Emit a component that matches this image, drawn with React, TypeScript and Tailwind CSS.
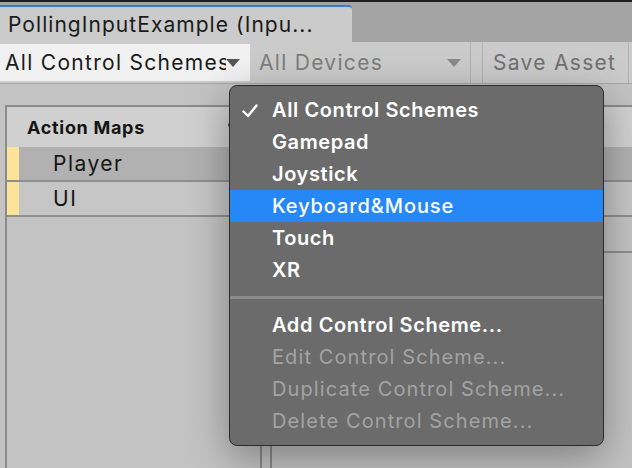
import React from "react";

// Unity Input Actions editor with the control-scheme dropdown open.

const menuTop = ["Gamepad", "Joystick", "Keyboard&Mouse", "Touch", "XR"];
const menuBottom: { label: string; enabled: boolean }[] = [
  { label: "Add Control Scheme...", enabled: true },
  { label: "Edit Control Scheme...", enabled: false },
  { label: "Duplicate Control Scheme...", enabled: false },
  { label: "Delete Control Scheme...", enabled: false },
];

function Caret({ className }: { className: string }) {
  return (
    <svg width="14" height="8" viewBox="0 0 14 8" className={className}>
      <path d="M0 0 H14 L7 8 Z" fill="currentColor" />
    </svg>
  );
}

export default function App() {
  return (
    <div className="relative h-[468px] w-[632px] overflow-hidden bg-[#c3c3c3] font-['Inter',sans-serif]">
      {/* tab strip */}
      <div className="h-[2px] bg-[#1f1f1f]" />
      <div className="flex h-[40px] items-end bg-[#a4a4a4]">
        <div className="flex h-[37px] w-[352px] items-center rounded-tr-[4px] border-t-[2px] border-[#3a7bd5] bg-[#cbcbcb] pl-[8px] text-[21px] tracking-[1.05px] text-[#1a1a1a]">
          PollingInputExample (Inpu...
        </div>
      </div>

      {/* toolbar */}
      <div className="flex h-[42px] items-center border-b border-[#a8a8a8] bg-[#cbcbcb] text-[21px] tracking-[1.3px]">
        <div className="relative flex h-[37px] w-[250px] items-center bg-[#f1f1f1] pl-[5px]">
          <span className="w-[221px] overflow-hidden whitespace-nowrap text-[#1a1a1a]">All Control Schemes</span>
          <Caret className="absolute left-[226px] top-[15px] text-[#555]" />
        </div>
        <div className="relative flex h-full w-[220px] items-center pl-[9px] text-[#7d7d7d]">
          All Devices
          <Caret className="absolute left-[197px] top-[17px] text-[#8a8a8a]" />
        </div>
        <div className="h-full w-[13px] border-x border-[#b3b3b3]" />
        <div className="flex h-full w-[145px] items-center pl-[10px] text-[#707070]">Save Asset</div>
        <div className="h-full flex-1 border-l border-[#b3b3b3]" />
      </div>

      {/* panels */}
      <div className="flex gap-[8px] pl-[5px] pt-[21px]">
        <div className="relative h-[400px] w-[257px] border-x-2 border-t-2 border-[#8b8b8b]">
          <div className="flex h-[40px] items-center bg-[#d0d0d0] pl-[20px] text-[18px] font-bold tracking-[0.7px] text-[#151515]">
            Action Maps
          </div>
          <span className="absolute left-[221px] top-[16px] h-[4px] w-[4px] rounded-full bg-[#333]" />
          <div className="flex h-[35px] border-b-2 border-[#8f8f8f] bg-[#b1b1b1]">
            <div className="w-[12px] bg-[#fbe39a]" />
            <span className="flex items-center pl-[34px] text-[21px] tracking-[1.5px] text-[#151515]">Player</span>
          </div>
          <div className="flex h-[35px] border-b-2 border-[#8f8f8f] bg-[#c6c6c6]">
            <div className="w-[12px] bg-[#fbe39a]" />
            <span className="flex items-center pl-[34px] text-[21px] tracking-[1.5px] text-[#151515]">UI</span>
          </div>
        </div>
        <div className="h-[400px] flex-1 border-l-2 border-t-2 border-[#8b8b8b]">
          <div className="h-[40px] bg-[#d0d0d0]" />
          <div className="h-[35px] border-b-2 border-[#8f8f8f] bg-[#b1b1b1]" />
          <div className="h-[35px] border-b-2 border-[#8f8f8f] bg-[#c6c6c6]" />
          <div className="h-[36px] border-b-2 border-[#8f8f8f]" />
        </div>
      </div>

      {/* dropdown menu */}
      <div className="absolute left-[229px] top-[85px] w-[375px] rounded-[8px] border border-[#2c2c2c] bg-[#6b6b6b] py-[8px] text-[20px] font-semibold tracking-[0.6px] shadow-[0_12px_40px_rgba(0,0,0,0.35)]">
        <div className="relative flex h-[32px] items-center pl-[42px] text-white">
          <svg width="16" height="14" viewBox="0 0 16 14" className="absolute left-[12px] top-[10px]">
            <path d="M1.5 7.5 L6 12 L14.5 1.5" fill="none" stroke="white" strokeWidth="2.4" strokeLinecap="round" strokeLinejoin="round" />
          </svg>
          All Control Schemes
        </div>
        {menuTop.map((item) => (
          <div
            key={item}
            className={
              item === "Keyboard&Mouse"
                ? "flex h-[32px] items-center bg-[#2588f6] pl-[42px] font-medium tracking-[0.9px] text-white"
                : "flex h-[32px] items-center pl-[42px] text-white"
            }
          >
            {item}
          </div>
        ))}
        <div className="my-[10px] h-[3px] bg-[#8b8b8b]" />
        {menuBottom.map((item) => (
          <div
            key={item.label}
            className={
              item.enabled
                ? "flex h-[32px] items-center pl-[42px] text-white"
                : "flex h-[32px] items-center pl-[42px] font-normal tracking-[1.1px] text-[#a3a3a3]"
            }
          >
            {item.label}
          </div>
        ))}
      </div>
    </div>
  );
}
